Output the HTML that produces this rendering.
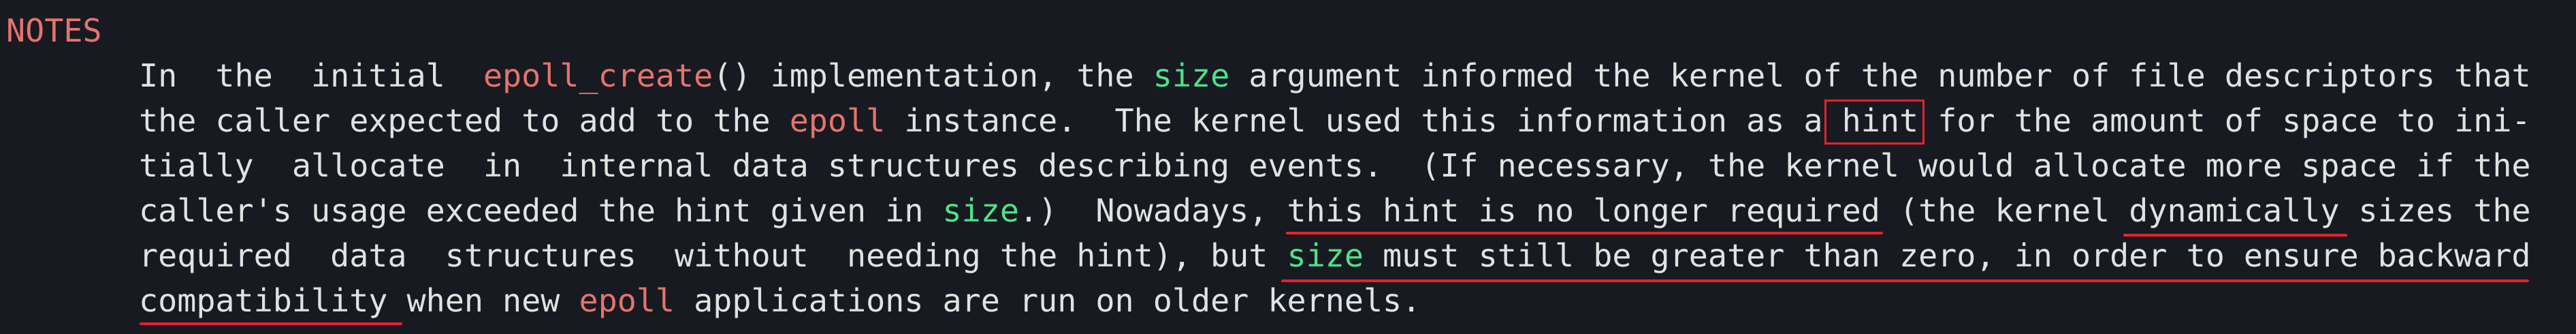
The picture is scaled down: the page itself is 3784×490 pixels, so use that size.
<!DOCTYPE html>
<html><head><meta charset="utf-8"><style>
html,body{margin:0;padding:0;background:#181a21;width:3784px;height:490px;overflow:hidden;position:relative}
.l{position:absolute;left:204px;white-space:pre;font-family:"DejaVu Sans Mono","Liberation Mono",monospace;font-size:46.7px;line-height:66px;color:#e2e2e2;margin:0}
.r{color:#e5736d}.g{color:#4ee28a}
.u{position:absolute;height:4px;background:#e8212b;border-radius:2px}
.box{position:absolute;border:3px solid #e8212b;box-sizing:border-box}
</style></head><body>
<div class="l r" style="left:9px;top:13px">NOTES</div>
<div class="l" style="top:79px">In  the  initial  <span class="r">epoll_create</span>() implementation, the <span class="g">size</span> argument informed the kernel of the number of file descriptors that</div>
<div class="l" style="top:145px">the caller expected to add to the <span class="r">epoll</span> instance.  The kernel used this information as a hint for the amount of space to ini-</div>
<div class="l" style="top:211px">tially  allocate  in  internal data structures describing events.  (If necessary, the kernel would allocate more space if the</div>
<div class="l" style="top:277px">caller's usage exceeded the hint given in <span class="g">size</span>.)  Nowadays, this hint is no longer required (the kernel dynamically sizes the</div>
<div class="l" style="top:343px">required  data  structures  without  needing the hint), but <span class="g">size</span> must still be greater than zero, in order to ensure backward</div>
<div class="l" style="top:409px">compatibility when new <span class="r">epoll</span> applications are run on older kernels.</div>
<div class="box" style="left:2680px;top:146px;width:147px;height:66px"></div>
<div class="u" style="left:1889px;top:340px;width:877px"></div>
<div class="u" style="left:3119px;top:343px;width:329px"></div>
<div class="u" style="left:1882px;top:410px;width:1833px"></div>
<div class="u" style="left:205px;top:473px;width:386px"></div>
</body></html>
